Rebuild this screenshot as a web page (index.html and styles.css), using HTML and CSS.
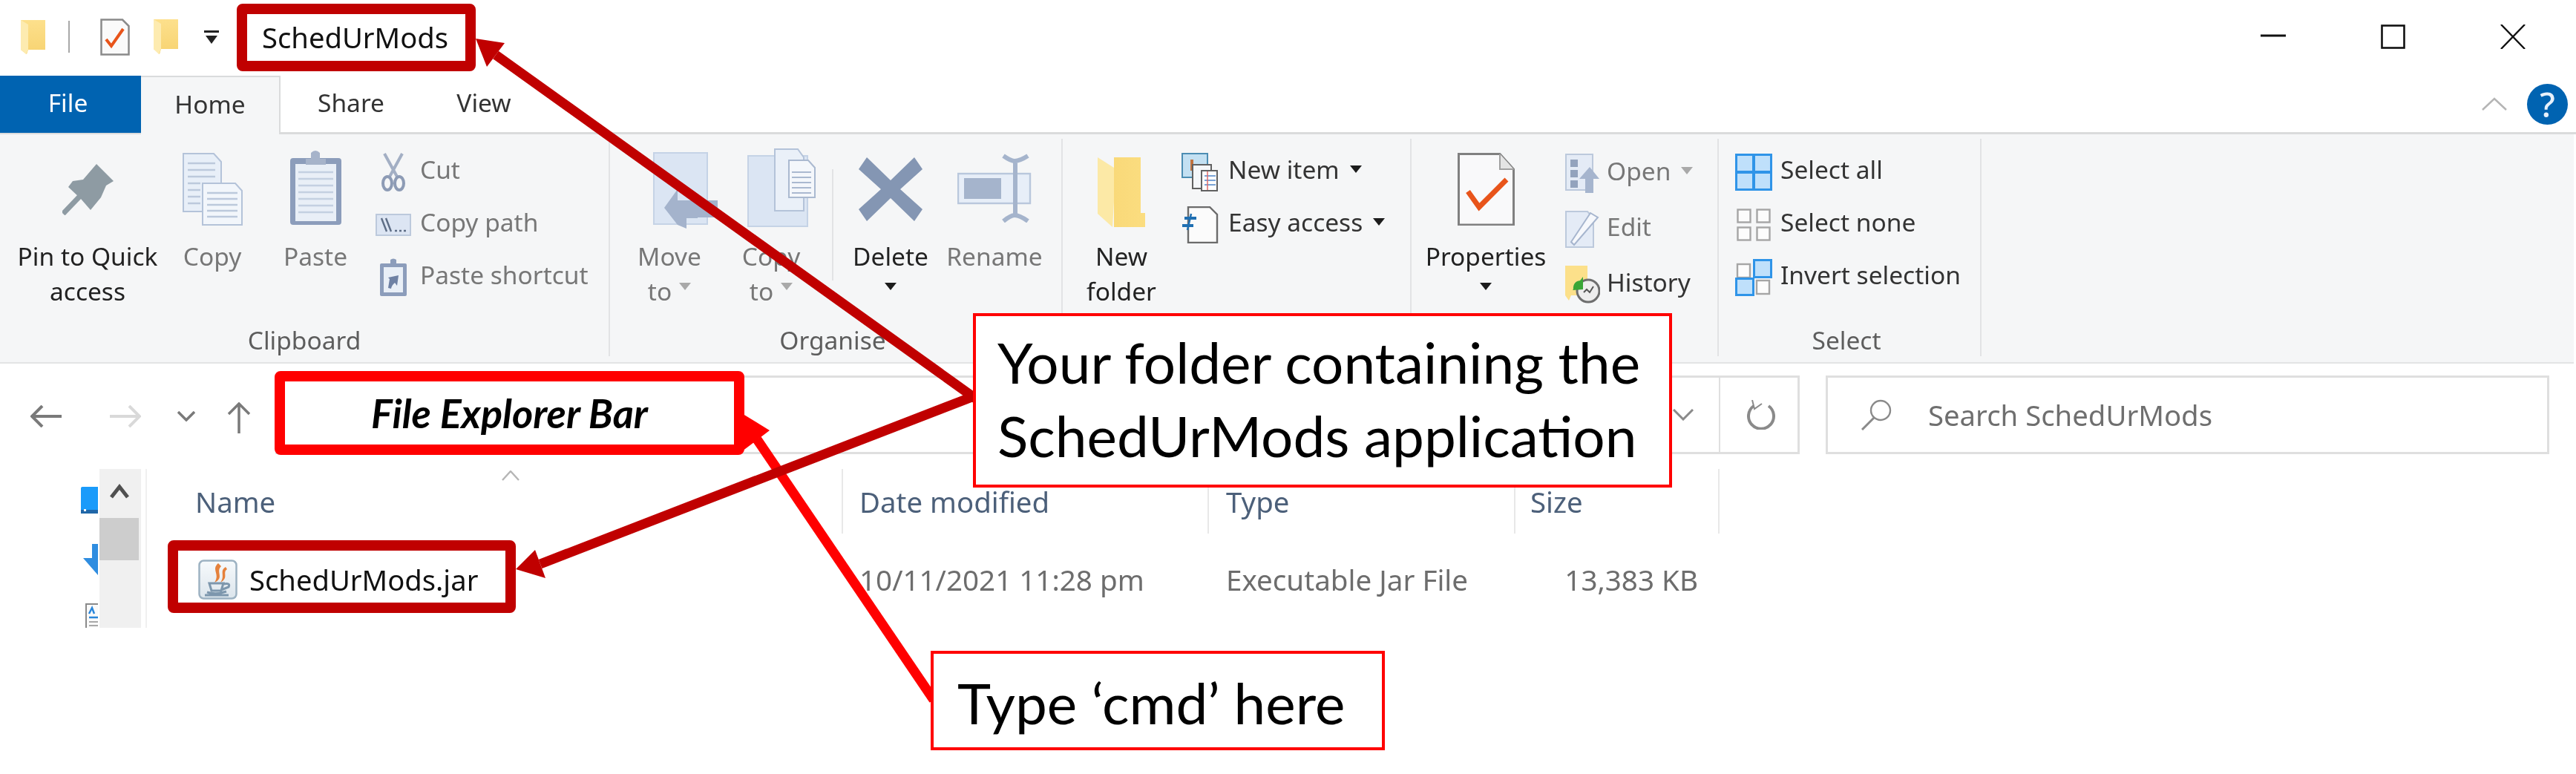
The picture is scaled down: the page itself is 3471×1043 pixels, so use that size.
FILE: index.html
```html
<!DOCTYPE html>
<html lang="en">
<head>
<meta charset="utf-8">
<title>SchedUrMods</title>
<link rel="stylesheet" href="styles.css">
</head>
<body>
<svg class="defs" width="0" height="0" aria-hidden="true">
  <defs>
    <linearGradient id="fold" x1="0" x2="1" y1="0" y2="0"><stop offset="0" stop-color="#F8D775"/><stop offset="1" stop-color="#FBDD80"/></linearGradient>
    <linearGradient id="qfold" x1="0" x2="0" y1="0" y2="1"><stop offset="0" stop-color="#FDE08C"/><stop offset="1" stop-color="#F7D371"/></linearGradient>
    <linearGradient id="jar" x1="0" x2="0" y1="0" y2="1"><stop offset="0" stop-color="#F7FAFC"/><stop offset="1" stop-color="#DCE5EC"/></linearGradient>
  </defs>
</svg>
<div class="window">
  <header class="titlebar">
    <svg class="q-folder1" width="33" height="46" viewBox="0 0 33 46"><path d="M0 0H33V40H10L8 46 0 40Z" fill="url(#qfold)"/><path d="M0 0L10 6V40L7 46 0 40Z" fill="#FDEBB0"/></svg>
    <span class="q-sep"></span>
    <svg class="q-doc" width="40" height="50" viewBox="0 0 40 50"><path d="M1.5 1.5H30L38.5 10V48.5H1.5Z" fill="#FAFAFA" stroke="#8A8A8A" stroke-width="2.5"/><path d="M8 28L15 37 31 14" fill="none" stroke="#E8541A" stroke-width="4"/></svg>
    <svg class="q-folder2" width="33" height="47" viewBox="0 0 33 47"><path d="M0 0H33V40H10L8 47 0 40Z" fill="url(#qfold)"/><path d="M0 0L10 6V40L7 47 0 40Z" fill="#FDEBB0"/></svg>
    <svg class="q-drop" width="20" height="18" viewBox="0 0 20 18"><rect y="0" width="20" height="3" fill="#222"/><path d="M2 7H18L10 18Z" fill="#222"/></svg>
    <span class="title-text">SchedUrMods</span>
    <div class="controls">
      <svg width="34" height="33" viewBox="0 0 34 33"><path d="M0 15H34" stroke="#111" stroke-width="3"/></svg>
      <svg width="33" height="33" viewBox="0 0 33 33"><rect x="1.5" y="1.5" width="30" height="30" fill="none" stroke="#111" stroke-width="2.6"/></svg>
      <svg width="34" height="33" viewBox="0 0 34 33"><path d="M1 0L33 33M33 0L1 33" stroke="#111" stroke-width="2.4"/></svg>
    </div>
  </header>

  <nav class="tabs">
    <span class="tab tab-file">File</span>
    <span class="tab tab-home">Home</span>
    <span class="tab tab-share">Share</span>
    <span class="tab tab-view">View</span>
    <svg class="collapse" width="34" height="18" viewBox="0 0 34 18"><path d="M1 17L17 2 33 17" fill="none" stroke="#B5B5B5" stroke-width="2.5"/></svg>
    <span class="help">?</span>
  </nav>

  <section class="ribbon">
    <div class="group g-clip">
      <div class="tools">
        <div class="big b-pin">
          <div class="ico"><svg width="70" height="90" viewBox="0 0 70 90"><g transform="translate(0,20)" fill="#8E9BA3"><path d="M46 1L69 24 59 30 52 46 38 63 25 48 8 32 14 24 28 22Z"/><path d="M24 44L1 68" stroke="#8E9BA3" stroke-width="7" fill="none"/></g></svg></div>
          <div class="t dark">Pin to Quick<br>access</div>
        </div>
        <div class="big b-copy">
          <div class="ico"><svg width="81" height="104" viewBox="0 0 81 104"><g fill="#E8EFF8" stroke="#B4C3D9" stroke-width="2"><path d="M1 7H42L52 18V85H1Z"/><path d="M27 47H71L80 57V103H27Z" fill="#F2F6FB"/></g><path d="M7 20H44M7 29H44M7 38H44M7 47H24M7 56H24M7 65H24M7 74H24M33 60H74M33 68H74M33 76H74M33 84H74M33 92H74" stroke="#BCC9DC" stroke-width="2.4"/></svg></div>
          <div class="t mute">Copy</div>
        </div>
        <div class="big b-paste">
          <div class="ico"><svg width="71" height="104" viewBox="0 0 71 104"><rect x="1" y="13" width="69" height="90" rx="4" fill="#8C9DBB"/><rect x="8" y="21" width="55" height="77" fill="#E9EFF7"/><path d="M12 32H59M12 41H59M12 50H59M12 59H59M12 68H59M12 77H59M12 86H59" stroke="#C4D0E1" stroke-width="2.4"/><path d="M22 22V14H29V6Q35 0 41 6V14H49V22Z" fill="#A6B3CA"/></svg></div>
          <div class="t mute">Paste</div>
        </div>
        <div class="col">
          <div class="sm"><span class="smi"><svg width="34" height="52" viewBox="0 0 34 52"><path d="M5 1L22 32M29 1L12 32" stroke="#A3AFC4" stroke-width="4" fill="none"/><ellipse cx="9" cy="41" rx="6" ry="9" fill="none" stroke="#8D9BB5" stroke-width="4"/><ellipse cx="25" cy="41" rx="6" ry="9" fill="none" stroke="#8D9BB5" stroke-width="4"/></svg></span><span class="mute st">Cut</span></div>
          <div class="sm"><span class="smi"><svg width="48" height="30" viewBox="0 0 48 30"><rect x="1" y="1" width="46" height="28" fill="#DCE5F3" stroke="#BCC9DC" stroke-width="2"/><path d="M8 6L15 24M14 6L21 24" stroke="#5E6E86" stroke-width="2.4"/><path d="M26 23H29M32 23H35M38 23H41" stroke="#5E6E86" stroke-width="2.4"/></svg></span><span class="mute st">Copy path</span></div>
          <div class="sm"><span class="smi"><svg width="38" height="52" viewBox="0 0 38 52"><rect x="1" y="7" width="36" height="44" rx="2" fill="#8C9DBB"/><rect x="6" y="12" width="26" height="34" fill="#E9EFF7"/><path d="M11 12V7H15V2Q19 -1 23 2V7H27V12Z" fill="#8C9DBB"/><path d="M12 40L14 28 12 26 26 23 24 37 21 33Q17 36 16 41Z" fill="#6E81A4"/></svg></span><span class="mute st">Paste shortcut</span></div>
        </div>
      </div>
      <div class="label">Clipboard</div>
    </div>

    <div class="group g-org">
      <div class="tools">
        <div class="big b-move">
          <div class="ico"><svg width="88" height="108" viewBox="0 0 88 108"><rect x="1" y="6" width="72" height="96" fill="#DBE5F3" stroke="#C5D3E6" stroke-width="2"/><path d="M33 55V70H87V93H60V94H45V108L33 103 15 80Z" fill="#A4B3CC"/></svg></div>
          <div class="t mute">Move<div class="l2">to<i class="caret grey"></i></div></div>
        </div>
        <div class="big b-copyto">
          <div class="ico"><svg width="92" height="106" viewBox="0 0 92 106"><rect x="1" y="10" width="80" height="95" fill="#DBE5F3" stroke="#C5D3E6" stroke-width="2"/><path d="M37 1H68L76 12V84H37Z" fill="#EAF0F8" stroke="#B4C3D9" stroke-width="2"/><path d="M56 16H82L91 26V66H56Z" fill="#F4F7FB" stroke="#AAB9D0" stroke-width="2"/><path d="M60 32H86M60 39H86M60 46H86M60 53H86M60 60H86" stroke="#AAB9D0" stroke-width="2"/></svg></div>
          <div class="t mute">Copy<div class="l2">to<i class="caret grey"></i></div></div>
        </div>
        <span class="vsep"></span>
        <div class="big b-del">
          <div class="ico"><svg width="86" height="98" viewBox="0 0 86 98"><g transform="translate(0,12)"><path d="M11 0L43 31 75 0 86 16 56 43 86 70 75 86 43 55 11 86 0 70 30 43 0 16Z" fill="#8496B3"/></g></svg></div>
          <div class="t dark">Delete<div class="l2"><i class="caret black"></i></div></div>
        </div>
        <div class="big b-ren">
          <div class="ico"><svg width="100" height="100" viewBox="0 0 100 100"><rect x="1" y="34" width="97" height="40" fill="#E7EEF8" stroke="#B9C7DC" stroke-width="2.4"/><rect x="9" y="40" width="50" height="28" fill="#A5B4CC"/><path d="M62 10Q72 17 77 17Q84 17 95 10M62 98Q72 90 77 90Q84 90 95 98M78 15V92" fill="none" stroke="#A5B4CC" stroke-width="6"/></svg></div>
          <div class="t mute">Rename</div>
        </div>
      </div>
      <div class="label label-org">Organise</div>
    </div>

    <div class="group g-new">
      <div class="tools">
        <div class="big b-new">
          <div class="ico"><svg width="65" height="106" viewBox="0 0 65 106"><g transform="translate(0,12)"><path d="M0 0H58V75H64V94H22V0Z" fill="url(#fold)"/><path d="M0 0L22 14V60L20 94 0 76Z" fill="#FCE9A6"/></g></svg></div>
          <div class="t dark">New<br>folder</div>
        </div>
        <div class="col">
          <div class="sm"><span class="smi si2"><svg width="50" height="52" viewBox="0 0 50 52"><rect x="1" y="1" width="34" height="32" fill="#C3E0F2" stroke="#4C8DB3" stroke-width="2"/><rect x="12" y="9" width="4" height="15" fill="#C1733F"/><path d="M15 16H40V48H15Z" fill="#F5F7FA" stroke="#616161" stroke-width="2"/><path d="M27 24H48V51H27Z" fill="#FDFDFD" stroke="#616161" stroke-width="2"/><path d="M31 31H46M31 37H46M31 43H46" stroke="#7AA3D6" stroke-width="2"/><path d="M35 25V50" stroke="#E06A6A" stroke-width="1.5"/></svg></span><span class="dark2 st">New item<i class="caret black sc"></i></span></div>
          <div class="sm"><span class="smi si2"><svg width="50" height="50" viewBox="0 0 50 50"><path d="M9 1H38L48 11V49H9Z" fill="#FBFBFB" stroke="#6B6B6B" stroke-width="2.4"/><path d="M4 16H20M1 26H16" stroke="#1F6FB2" stroke-width="4"/><path d="M13 10L8 32" stroke="#1F6FB2" stroke-width="2.5"/></svg></span><span class="dark2 st">Easy access<i class="caret black sc"></i></span></div>
        </div>
      </div>
      <div class="label"></div>
    </div>

    <div class="group g-open">
      <div class="tools">
        <div class="big b-prop">
          <div class="ico"><svg width="77" height="104" viewBox="0 0 77 104"><path d="M1.5 7.5H57L75.5 28V103H1.5Z" fill="#F9F9FA" stroke="#808080" stroke-width="3"/><path d="M57 7.5V28H75.5" fill="#E4E4E4" stroke="#A0A0A0" stroke-width="2"/><path d="M14 58L29 79 66 42" fill="none" stroke="#E8541A" stroke-width="7"/></svg></div>
          <div class="t dark">Properties<div class="l2"><i class="caret black"></i></div></div>
        </div>
        <div class="col col-open">
          <div class="sm"><span class="smi si3"><svg width="46" height="53" viewBox="0 0 46 53"><rect x="1" y="1" width="36" height="48" fill="#E4EBF6" stroke="#BCC9DC" stroke-width="2"/><path d="M7 8H17V18H7ZM7 22H17V32H7ZM7 36H17V46H7Z" fill="#93A3BD"/><path d="M27 53V34H19L33 18 46 34H38V53Z" fill="#A6B5CE"/></svg></span><span class="mute st">Open<i class="caret grey sc"></i></span></div>
          <div class="sm"><span class="smi si3"><svg width="46" height="50" viewBox="0 0 46 50"><path d="M1 1H30L38 10V49H1Z" fill="#E4EBF6" stroke="#BCC9DC" stroke-width="2"/><path d="M8 42L34 3 44 9 12 46Z" fill="#F6F8FC" stroke="#A6B5CE" stroke-width="2"/></svg></span><span class="mute st">Edit</span></div>
          <div class="sm sm-hist"><span class="smi si3"><svg width="47" height="51" viewBox="0 0 47 51"><path d="M0 0H30V40H8L5 47 0 40Z" fill="#FCE08A"/><circle cx="31" cy="34" r="15" fill="#EDEDED" stroke="#6E6E6E" stroke-width="3"/><path d="M25 36L29 32 33 36 38 28" fill="none" stroke="#555" stroke-width="2"/><path d="M24 15L10 33 24 32Z" fill="#3AA637"/><path d="M13 32Q12 22 22 22" fill="none" stroke="#3AA637" stroke-width="4"/></svg></span><span class="dark2 st">History</span></div>
        </div>
      </div>
      <div class="label"></div>
    </div>

    <div class="group g-sel">
      <div class="tools">
        <div class="col">
          <div class="sm"><span class="smi si4"><svg width="50" height="50" viewBox="0 0 50 50"><rect x="1.5" y="1.5" width="47" height="47" fill="#BFE0FB" stroke="#2F94E8" stroke-width="3"/><path d="M25 1V49M1 25H49" stroke="#2F94E8" stroke-width="4"/></svg></span><span class="dark2 st">Select all</span></div>
          <div class="sm"><span class="smi si4"><svg width="46" height="44" viewBox="0 0 46 44"><g fill="#FCFCFC" stroke="#A5A5A5" stroke-width="2.4"><rect x="1.5" y="1.5" width="17" height="17"/><rect x="27.5" y="1.5" width="17" height="17"/><rect x="1.5" y="25.5" width="17" height="17"/><rect x="27.5" y="25.5" width="17" height="17"/></g></svg></span><span class="dark2 st">Select none</span></div>
          <div class="sm"><span class="smi si4"><svg width="50" height="50" viewBox="0 0 50 50"><g fill="#FCFCFC" stroke="#A5A5A5" stroke-width="2.4"><rect x="3" y="7" width="17" height="18"/><rect x="29" y="29" width="17" height="18"/></g><g fill="#BFE0FB" stroke="#2F94E8" stroke-width="3"><rect x="25.5" y="1.5" width="23" height="23"/><rect x="1.5" y="26.5" width="23" height="22"/></g></svg></span><span class="dark2 st">Invert selection</span></div>
        </div>
      </div>
      <div class="label label-sel">Select</div>
    </div>
  </section>

  <div class="navrow">
    <svg class="n-back" width="42" height="30" viewBox="0 0 42 30"><path d="M42 15H3M16 1L2 15 16 29" fill="none" stroke="#7A7A7A" stroke-width="4"/></svg>
    <svg class="n-fwd" width="42" height="30" viewBox="0 0 42 30"><path d="M0 15H39M26 1L40 15 26 29" fill="none" stroke="#D9D9D9" stroke-width="4"/></svg>
    <svg class="n-down" width="24" height="14" viewBox="0 0 24 14"><path d="M1 1L12 12 23 1" fill="none" stroke="#7A7A7A" stroke-width="3.5"/></svg>
    <svg class="n-up" width="32" height="42" viewBox="0 0 32 42"><path d="M16 42V3M2 16L16 2 30 16" fill="none" stroke="#7A7A7A" stroke-width="3.5"/></svg>
    <div class="address">
      <svg class="a-chev" width="28" height="16" viewBox="0 0 28 16"><path d="M1 1L14 14 27 1" fill="none" stroke="#8A8A8A" stroke-width="3"/></svg>
      <div class="refresh"><svg width="42" height="40" viewBox="0 0 42 40"><path d="M11 8A17 17 0 1 0 31 8" fill="none" stroke="#8A8A8A" stroke-width="4"/><path d="M9 0L12 12 22 5" fill="none" stroke="#8A8A8A" stroke-width="2"/></svg></div>
    </div>
    <div class="search">
      <svg width="44" height="42" viewBox="0 0 44 42"><circle cx="27" cy="15" r="13" fill="none" stroke="#8A8A8A" stroke-width="2.4"/><path d="M18 25L2 41" stroke="#8A8A8A" stroke-width="3"/></svg>
      <span>Search SchedUrMods</span>
    </div>
  </div>

  <div class="content">
    <aside class="navpane">
      <div class="np-icons">
        <svg width="23" height="36" viewBox="0 0 23 36"><rect x="0" y="0" width="30" height="36" rx="2" fill="#1A9BFA"/><rect x="0" y="31" width="30" height="5" fill="#2067A8"/><rect x="4" y="30" width="3" height="3" fill="#fff"/></svg>
        <svg width="20" height="42" viewBox="0 0 20 42"><path d="M20 0H12V19H0L20 42Z" fill="#2F8DE0"/></svg>
        <svg width="17" height="33" viewBox="0 0 17 33"><rect x="1" y="1" width="30" height="40" fill="#FAFAFA" stroke="#8A8A8A" stroke-width="2"/><path d="M5 14L9 6 12 14M5 19H17" stroke="#2A86DA" stroke-width="2.5" fill="none"/><path d="M5 25H17M5 30H17" stroke="#A8A8A8" stroke-width="2"/></svg>
      </div>
      <div class="np-scroll">
        <div class="np-btn"><svg width="26" height="20" viewBox="0 0 26 20"><path d="M2 18L13 4 24 18" fill="none" stroke="#505050" stroke-width="5"/></svg></div>
        <div class="np-thumb"></div>
      </div>
    </aside>
    <main class="list">
      <div class="head">
        <div class="c c-name">Name<svg class="sort" width="24" height="14" viewBox="0 0 24 14"><path d="M1 13L12 1 23 13" fill="none" stroke="#B5B5B5" stroke-width="2.4"/></svg></div>
        <div class="c c-date">Date modified</div>
        <div class="c c-type">Type</div>
        <div class="c c-size">Size</div>
      </div>
      <div class="row">
        <div class="r r-name">
          <svg width="53" height="54" viewBox="0 0 53 54"><rect x="1.5" y="1.5" width="50" height="51" rx="6" fill="url(#jar)" stroke="#9DB2C2" stroke-width="2.5"/><path d="M27 5C17 14 30 19 22 31 36 24 23 17 31 9ZM37 10C28 16 37 21 30 31 42 24 32 18 39 13Z" fill="#E5813B"/><path d="M15 32H34L31 42H18ZM34 33Q44 31 41 37L31 41M12 44Q24 48 38 43M9 48H41" fill="none" stroke="#7D97AD" stroke-width="3"/></svg>
          <span>SchedUrMods.jar</span>
        </div>
        <div class="r r-date">10/11/2021 11:28 pm</div>
        <div class="r r-type">Executable Jar File</div>
        <div class="r r-size">13,383 KB</div>
      </div>
    </main>
  </div>
</div>

<svg class="arrows" width="3471" height="1043" viewBox="0 0 3471 1043" aria-hidden="true">
  <path d="M1020 592L1258 943" stroke="#FF0000" stroke-width="13" fill="none"/>
  <path d="M993 553L1037 580 1000 608Z" fill="#FF0000"/>
  <path d="M668 74L1320 541" stroke="#C00000" stroke-width="13" fill="none"/>
  <path d="M641 52L680 58 656 90Z" fill="#C00000"/>
  <path d="M728 760L1320 531" stroke="#C00000" stroke-width="13" fill="none"/>
  <path d="M695 767L721 741 735 779Z" fill="#C00000"/>
</svg>
<div class="mark mark-title"></div>
<div class="mark mark-jar"></div>
<div class="mark mark-addr"><span>File Explorer Bar</span></div>
<div class="callout call-folder">Your folder containing the<br>SchedUrMods application</div>
<div class="callout call-cmd">Type ‘cmd’ here</div>
</body>
</html>
```

FILE: styles.css
```css
* { box-sizing: border-box; }
html, body { margin: 0; padding: 0; background: #fff; }
body { position: relative; width: 3471px; height: 1043px; overflow: hidden; font-family: "Noto Sans", "Open Sans", sans-serif; color: #1a1a1a; }
.defs { position: absolute; }
svg { display: block; flex: none; }

.window { width: 3471px; height: 1043px; filter: blur(0.6px); font-size: 33.5px; }

/* title bar */
.titlebar { height: 102px; display: flex; align-items: center; padding: 0 68px 3px 28px; }
.q-sep { width: 2px; height: 43px; background: #A8A8A8; margin-left: 31px; }
.q-doc { margin-left: 41px; }
.q-folder2 { margin-left: 32px; }
.q-drop { margin-left: 35px; }
.title-text { margin-left: 58px; font-size: 38.2px; color: #111; }
.controls { margin-left: auto; display: flex; gap: 128px; }

/* tabs */
.tabs { height: 79px; display: flex; align-items: stretch; border-bottom: 3px solid #DADBDC; padding-right: 11px; }
.tab { display: flex; align-items: center; justify-content: center; padding-bottom: 6px; color: #333; }
.tab-file { width: 190px; padding-right: 7px; background: #0063B1; color: #fff; margin-bottom: -1px; }
.tab-home { width: 188px; background: #F5F6F7; border: 2px solid #DADBDC; border-width: 2px 2px 0 0; margin-bottom: -3px; }
.tab-share { width: 190px; padding-top: 2px; }
.tab-view { width: 168px; padding-top: 2px; }
.collapse { margin: 29px 27px 0 auto; }
.help { width: 55px; height: 55px; margin-top: 11px; border-radius: 50%; background: #0063B1; color: #E8F1FA; font-size: 46px; line-height: 54px; text-align: center; font-weight: 500; }

/* ribbon */
.ribbon { height: 309px; width: 3468px; background: #F5F6F7; border-bottom: 2px solid #E3E4E5; display: flex; }
.group { display: flex; flex-direction: column; padding-top: 15px; border-right: 2px solid transparent; position: relative; }
.group::after { content: ""; position: absolute; right: -2px; top: 6px; bottom: 8px; width: 2px; background: #E2E3E5; }
.g-clip { width: 822px; }
.g-org { width: 610px; padding-left: 14px; }
.g-new { width: 470px; padding-left: 18px; }
.g-open { width: 414px; padding-left: 10px; }
.g-sel { width: 354px; padding-left: 22px; }
.tools { display: flex; height: 226px; align-items: flex-start; }
.label { margin-top: auto; height: 47px; margin-bottom: 6px; line-height: 47px; text-align: center; color: #5D5D5D; }
.label-org { padding-right: 22px; }
.label-sel { padding-right: 30px; }

.big { display: flex; flex-direction: column; align-items: center; line-height: 47px; text-align: center; flex: none; }
.ico { height: 110px; margin: 4px 0 12px; display: flex; align-items: flex-start; padding-top: 0; }
.t { white-space: nowrap; }
.dark { color: #222; }
.dark2 { color: #333; white-space: nowrap; }
.mute { color: #777; white-space: nowrap; }
.st { padding-bottom: 7px; }
.l2 { height: 47px; display: flex; align-items: center; justify-content: center; gap: 10px; }

.caret { display: inline-block; width: 0; height: 0; border-left: 8px solid transparent; border-right: 8px solid transparent; border-top: 10px solid #222; margin-bottom: 14px; }
.caret.grey { border-top-color: #A9A9A9; }
.caret.black { border-top-color: #1c1c1c; }
.caret.sc { margin: 0 0 8px 14px; vertical-align: middle; }

.b-pin { width: 236px; }
.b-pin .ico { padding-left: 2px; }
.b-copy { width: 100px; }
.b-paste { width: 162px; margin-left: 8px; }
.b-move { width: 132px; }
.b-move .ico { padding-left: 44px; }
.b-copyto { width: 132px; margin-left: 5px; }
.b-copyto .ico { padding-left: 28px; margin-top: 4px; }
.vsep { width: 2px; height: 150px; background: #E2E3E5; margin: 32px 3px 0 16px; flex: none; }
.b-del { width: 148px; }
.b-ren { width: 132px; }
.b-new { width: 122px; }
.b-prop { width: 180px; }

.col { display: flex; flex-direction: column; flex: none; }
.sm { height: 71px; display: flex; align-items: center; }
.smi { width: 48px; margin-right: 12px; display: flex; justify-content: center; flex: none; }
.si2 { width: 50px; margin-right: 13px; }
.g-new .col { margin-left: 20px; }
.col-open { margin-left: 17px; }
.col-open .sm { height: 75px; }
.si3 { width: 46px; margin-right: 10px; justify-content: flex-start; }
.si4 { width: 50px; margin-right: 11px; }

/* nav row */
.navrow { height: 142px; display: flex; align-items: center; }
.n-back { margin-left: 41px; }
.n-fwd { margin-left: 65px; }
.n-down { margin-left: 49px; }
.n-up { margin-left: 43px; margin-top: 4px; }
.address { margin-left: 33px; width: 2054px; height: 106px; align-self: flex-start; margin-top: 16px; border: 3px solid #DFDFDF; display: flex; align-items: center; justify-content: flex-end; }
.a-chev { margin-right: 34px; }
.refresh { width: 106px; height: 100%; border-left: 2px solid #DFDFDF; display: flex; align-items: center; padding-left: 34px; }
.search { margin-left: 35px; width: 975px; height: 106px; align-self: flex-start; margin-top: 16px; border: 3px solid #DFDFDF; display: flex; align-items: center; padding-left: 44px; gap: 47px; font-size: 38.3px; color: #6F6F6F; }

/* content */
.content { display: flex; height: 214px; }
.navpane { width: 198px; height: 214px; border-right: 2px solid #F0F0F0; display: flex; }
.np-icons { width: 134px; padding: 24px 2px 0 109px; display: flex; flex-direction: column; align-items: flex-end; overflow: hidden; }
.np-icons svg:nth-child(2) { margin-top: 41px; }
.np-icons svg:nth-child(3) { margin-top: 38px; }
.np-scroll { width: 56px; background: #F0F0F0; }
.np-btn { height: 66px; display: flex; justify-content: center; padding-top: 20px; padding-right: 3px; }
.np-thumb { width: 53px; height: 57px; background: #CDCDCD; }

.list { flex: 1; }
.head { display: flex; height: 87px; font-size: 38.4px; color: #4C607A; }
.c { height: 87px; line-height: 88px; border-right: 2px solid #E8E8E8; position: relative; }
.c-name { width: 938px; padding-left: 65px; }
.c-date { width: 493px; padding-left: 22px; }
.c-type { width: 413px; padding-left: 23px; }
.c-size { width: 275px; padding-left: 20px; }
.sort { position: absolute; left: 478px; top: 2px; }
.row { display: flex; height: 124px; align-items: center; font-size: 38.6px; color: #6D6D6D; }
.r { white-space: nowrap; }
.r-name { width: 938px; padding-left: 69px; display: flex; align-items: center; gap: 16px; color: #111; font-size: 38.2px; }
.r-date { width: 493px; padding-left: 22px; }
.r-type { width: 413px; padding-left: 23px; }
.r-size { width: 275px; padding-right: 29px; text-align: right; }

/* annotation layer */
.arrows { position: absolute; left: 0; top: 0; }
.mark { position: absolute; border: 14px solid #C00000; border-radius: 8px; }
.mark-title { left: 319px; top: 5px; width: 322px; height: 91px; }
.mark-jar { left: 226px; top: 728px; width: 469px; height: 98px; }
.mark-addr { left: 370px; top: 500px; width: 633px; height: 113px; border-color: #FF0000; background: #fff; display: flex; align-items: center; justify-content: center; }
.mark-addr span { font: italic 700 54px "Lato", sans-serif; color: #000; }
.callout { position: absolute; background: #fff; border: 4px solid #FF0000; font-family: "Lato", sans-serif; color: #000; font-size: 76.5px; line-height: 99px; white-space: nowrap; }
.call-folder { left: 1311px; top: 422px; width: 942px; height: 235px; padding: 12px 0 0 29px; }
.call-cmd { left: 1254px; top: 877px; width: 612px; height: 134px; padding: 16px 0 0 32px; }
```
